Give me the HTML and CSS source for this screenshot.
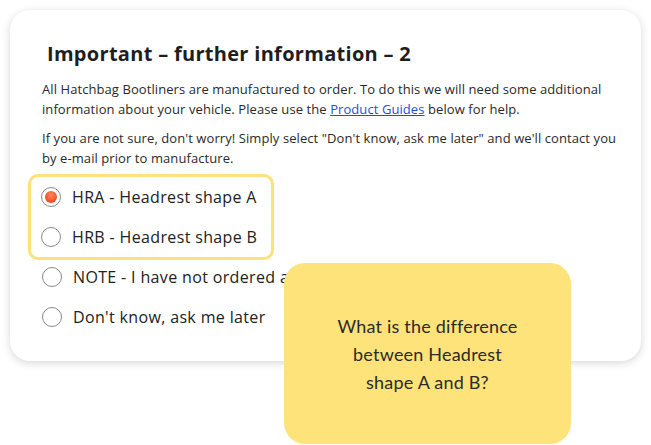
FILE: index.html
```html
<!DOCTYPE html>
<html lang="en">
<head>
<meta charset="utf-8">
<title>Important – further information – 2</title>
<link rel="stylesheet" href="styles.css">
</head>
<body>
<div class="page">
  <section class="card">
    <h1 class="title">Important – further information – 2</h1>
    <p class="text">All Hatchbag Bootliners are manufactured to order. To do this we will need some additional information about your vehicle. Please use the <a class="link" href="#">Product Guides</a> below for help.</p>
    <p class="text">If you are not sure, don't worry! Simply select "Don't know, ask me later" and we'll contact you by e-mail prior to manufacture.</p>
    <div class="options">
      <div class="highlight">
        <label class="option"><span class="radio checked"></span><span class="label">HRA - Headrest shape A</span></label>
        <label class="option"><span class="radio"></span><span class="label">HRB - Headrest shape B</span></label>
      </div>
      <label class="option"><span class="radio"></span><span class="label">NOTE - I have not ordered a headrest cover</span></label>
      <label class="option"><span class="radio"></span><span class="label">Don't know, ask me later</span></label>
    </div>
  </section>
  <div class="note">
    <p class="note-text">What is the difference<br>between Headrest<br>shape A and B?</p>
  </div>
</div>
</body>
</html>
```
FILE: styles.css
```css
* { box-sizing: border-box; }
html, body { margin: 0; padding: 0; background: #ffffff; }
body {
  width: 651px;
  height: 445px;
  overflow: hidden;
  font-family: "Open Sans", "Liberation Sans", sans-serif;
  color: #222222;
}
.page {
  position: relative;
  padding: 10px;
  width: 651px;
  height: 445px;
}
.card {
  width: 631px;
  height: 351px;
  background: #ffffff;
  border-radius: 20px;
  box-shadow: 0 2px 8px rgba(0, 0, 0, 0.16);
  padding: 30px 18px 0 32px;
  overflow: hidden;
}
.title {
  margin: 0 0 12px 5px;
  font-size: 20px;
  line-height: 28px;
  font-weight: 700;
  letter-spacing: 0.3px;
  color: #1e1e1e;
  white-space: nowrap;
}
.text {
  margin: 0 0 10px 0;
  font-size: 13px;
  line-height: 19.5px;
  letter-spacing: 0.08px;
  color: #2a2a2a;
}
.link { color: #1d4fd8; text-decoration: underline; }
.options {
  display: flex;
  flex-direction: column;
  margin-top: -4px;
}
.highlight {
  align-self: flex-start;
  width: 246px;
  margin: 0 0 -3px -14px;
  padding: 0 10px;
  border: 3px solid #fde27a;
  border-radius: 10px;
}
.option {
  display: flex;
  align-items: center;
  gap: 11px;
  height: 40px;
  font-size: 16px;
  letter-spacing: 0.35px;
  color: #222222;
  white-space: nowrap;
}
.radio {
  flex: none;
  width: 20px;
  height: 20px;
  border-radius: 50%;
  border: 1.5px solid #8a8a8a;
  background: #ffffff;
  display: flex;
  align-items: center;
  justify-content: center;
}
.radio.checked::after {
  content: "";
  width: 12px;
  height: 12px;
  border-radius: 50%;
  background: radial-gradient(circle at 50% 35%, #ff8a62 0%, #f4522a 60%, #e8431d 100%);
}
.note {
  position: absolute;
  left: 284px;
  top: 263px;
  width: 287px;
  height: 181px;
  background: #fde37a;
  border-radius: 21px;
  display: flex;
  align-items: center;
  justify-content: center;
}
.note-text {
  margin: 0;
  font-family: "Lato", "Open Sans", sans-serif;
  font-size: 18px;
  line-height: 28px;
  letter-spacing: 0.2px;
  text-align: center;
  color: #2b2b2b;
}
```
